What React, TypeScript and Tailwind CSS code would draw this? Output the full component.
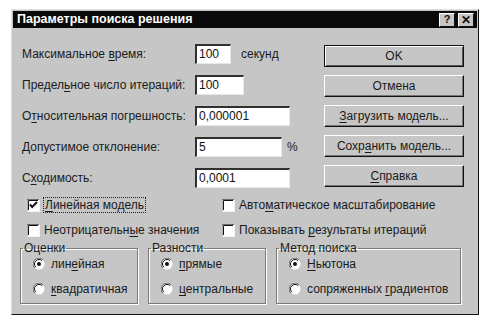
import type { ReactNode } from 'react'

const FONT = "font-['Liberation_Sans',Arial,sans-serif]"

function U({ children }: { children: ReactNode }) {
  return <span className="underline underline-offset-2 decoration-1">{children}</span>
}

function Field({ value, width }: { value: string; width: string }) {
  return (
    <div
      className={`${width} h-[20px] bg-white border-t-2 border-l-2 border-t-[#303030] border-l-[#303030] border-b border-r border-b-[#e8e8e8] border-r-[#e8e8e8] flex items-center pl-[2px] text-[12px] text-[#111]`}
    >
      {value}
    </div>
  )
}

function Button({ children, isDefault }: { children: ReactNode; isDefault?: boolean }) {
  return (
    <div
      className={`w-[140px] h-[22px] flex items-center justify-center text-[12px] whitespace-nowrap text-[#1a1a1a] ${
        isDefault
          ? 'border border-[#111] shadow-[inset_1px_1px_0_#ffffff,inset_-1px_-1px_0_#555]'
          : 'border border-t-white border-l-white border-b-[#111] border-r-[#111] shadow-[inset_-1px_-1px_0_#777]'
      }`}
    >
      {children}
    </div>
  )
}

function Checkbox({ checked }: { checked?: boolean }) {
  return (
    <svg width="13" height="13" viewBox="0 0 13 13" className="shrink-0">
      <rect x="0" y="0" width="13" height="13" fill="#ffffff" />
      <path d="M0 12.5V0.5H12.5" stroke="#6a6a6a" fill="none" />
      <path d="M1.5 11V1.5H11" stroke="#111" fill="none" />
      <path d="M0.5 12.5H12.5V0.5" stroke="#f4f4f4" fill="none" />
      {checked && <path d="M3 5.5L5.2 8L10 3" stroke="#111" strokeWidth="2" fill="none" />}
    </svg>
  )
}

function Radio({ checked }: { checked?: boolean }) {
  return (
    <svg width="12" height="12" viewBox="0 0 12 12" className="shrink-0">
      <circle cx="6" cy="6" r="5.5" fill="#ffffff" />
      <path d="M1.8 10.2A5.5 5.5 0 0 1 10.2 1.8" stroke="#6a6a6a" strokeWidth="1" fill="none" />
      <path d="M2.8 9.2A4.3 4.3 0 0 1 9.2 2.8" stroke="#111" strokeWidth="1" fill="none" />
      {checked && <circle cx="6" cy="6" r="2" fill="#111" />}
    </svg>
  )
}

function Group({
  legend,
  width,
  items,
}: {
  legend: string
  width: string
  items: { label: ReactNode; checked?: boolean }[]
}) {
  return (
    <fieldset
      className={`${width} h-[63px] border border-[#7a7a7a] shadow-[inset_1px_1px_0_#ffffff,1px_1px_0_#ffffff] pl-[12px] pt-[2px]`}
    >
      <legend className="-ml-[10px] px-[1px] text-[12px] leading-[15px] text-[#1a1a1a]">{legend}</legend>
      <div className="flex flex-col gap-[13px]">
        {items.map((it, i) => (
          <div
            key={i}
            className="flex items-center gap-[6px] h-[12px] text-[12px] whitespace-nowrap text-[#1a1a1a]"
          >
            <Radio checked={it.checked} />
            <span>{it.label}</span>
          </div>
        ))}
      </div>
    </fieldset>
  )
}

export default function App() {
  const rows: { label: ReactNode; field: ReactNode }[] = [
    {
      label: (
        <>
          Максимальное <U>в</U>ремя:
        </>
      ),
      field: (
        <div className="flex items-center gap-[10px]">
          <Field value="100" width="w-[36px]" />
          <span>секунд</span>
        </div>
      ),
    },
    {
      label: (
        <>
          Предел<U>ь</U>ное число итераций:
        </>
      ),
      field: <Field value="100" width="w-[49px]" />,
    },
    {
      label: (
        <>
          О<U>т</U>носительная погрешность:
        </>
      ),
      field: <Field value="0,000001" width="w-[95px]" />,
    },
    {
      label: (
        <>
          <U>Д</U>опустимое отклонение:
        </>
      ),
      field: (
        <div className="flex items-center gap-[5px]">
          <Field value="5" width="w-[87px]" />
          <span>%</span>
        </div>
      ),
    },
    {
      label: (
        <>
          С<U>х</U>одимость:
        </>
      ),
      field: <Field value="0,0001" width="w-[95px]" />,
    },
  ]

  return (
    <div className={`min-h-[327px] bg-white pt-[9px] pl-[11px] ${FONT}`}>
      <div className="w-[468px] h-[306px] bg-[#c6c6c6] border border-t-[#e0e0e0] border-l-[#e0e0e0] border-b-[#111] border-r-[#111] p-[1px] flex flex-col">
        {/* Title bar */}
        <div className="h-[17px] bg-[#0a0a0a] flex items-center pl-[4px] pr-[3px]">
          <span className="text-white font-bold text-[12.5px] whitespace-nowrap">Параметры поиска решения</span>
          <div className="ml-auto flex gap-[3px]">
            <div className="w-[16px] h-[14px] bg-[#c6c6c6] border border-t-white border-l-white border-b-[#111] border-r-[#111] flex items-center justify-center text-[11px] font-bold leading-none text-[#111]">
              ?
            </div>
            <div className="w-[16px] h-[14px] bg-[#c6c6c6] border border-t-white border-l-white border-b-[#111] border-r-[#111] flex items-center justify-center text-[12px] font-bold leading-none text-[#111]">
              ✕
            </div>
          </div>
        </div>

        {/* Fields and buttons */}
        <div className="flex items-start pl-[9px] pr-[13px] text-[12px] text-[#1a1a1a]">
          <div className="mt-[10px] flex flex-col">
            {rows.map((r, i) => (
              <div key={i} className="h-[31px] flex items-center whitespace-nowrap">
                <div className="w-[173px]">{r.label}</div>
                {r.field}
              </div>
            ))}
          </div>
          <div className="ml-auto mt-[17px] flex flex-col gap-[8px]">
            <Button isDefault>OK</Button>
            <Button>Отмена</Button>
            <Button>
              <U>З</U>агрузить модель...
            </Button>
            <Button>
              Сохр<U>а</U>нить модель...
            </Button>
            <Button>
              <U>С</U>правка
            </Button>
          </div>
        </div>

        {/* Checkboxes */}
        <div className="mt-[2px] pl-[14px] grid grid-cols-[195px_1fr] gap-y-[5px] text-[12px] whitespace-nowrap text-[#1a1a1a]">
          <div className="h-[20px] flex items-center gap-[3px]">
            <Checkbox checked />
            <span className="border border-dotted border-[#222] px-[1px] leading-[14px]">
              <U>Л</U>инейная модель
            </span>
          </div>
          <div className="h-[20px] flex items-center gap-[4px]">
            <Checkbox />
            <span>
              Авто<U>м</U>атическое масштабирование
            </span>
          </div>
          <div className="h-[20px] flex items-center gap-[4px]">
            <Checkbox />
            <span>
              Неотрицательн<U>ы</U>е значения
            </span>
          </div>
          <div className="h-[20px] flex items-center gap-[4px]">
            <Checkbox />
            <span>
              Показывать <U>р</U>езультаты итераций
            </span>
          </div>
        </div>

        {/* Group boxes */}
        <div className="mt-[1px] pl-[7px] flex gap-[10px]">
          <Group
            legend="Оценки"
            width="w-[118px]"
            items={[
              {
                label: (
                  <>
                    лин<U>е</U>йная
                  </>
                ),
                checked: true,
              },
              {
                label: (
                  <>
                    <U>к</U>вадратичная
                  </>
                ),
              },
            ]}
          />
          <Group
            legend="Разности"
            width="w-[118px]"
            items={[
              {
                label: (
                  <>
                    <U>п</U>рямые
                  </>
                ),
                checked: true,
              },
              {
                label: (
                  <>
                    <U>ц</U>ентральные
                  </>
                ),
              },
            ]}
          />
          <Group
            legend="Метод поиска"
            width="w-[185px]"
            items={[
              {
                label: (
                  <>
                    <U>Н</U>ьютона
                  </>
                ),
                checked: true,
              },
              {
                label: (
                  <>
                    сопряженных <U>г</U>радиентов
                  </>
                ),
              },
            ]}
          />
        </div>
      </div>
    </div>
  )
}
